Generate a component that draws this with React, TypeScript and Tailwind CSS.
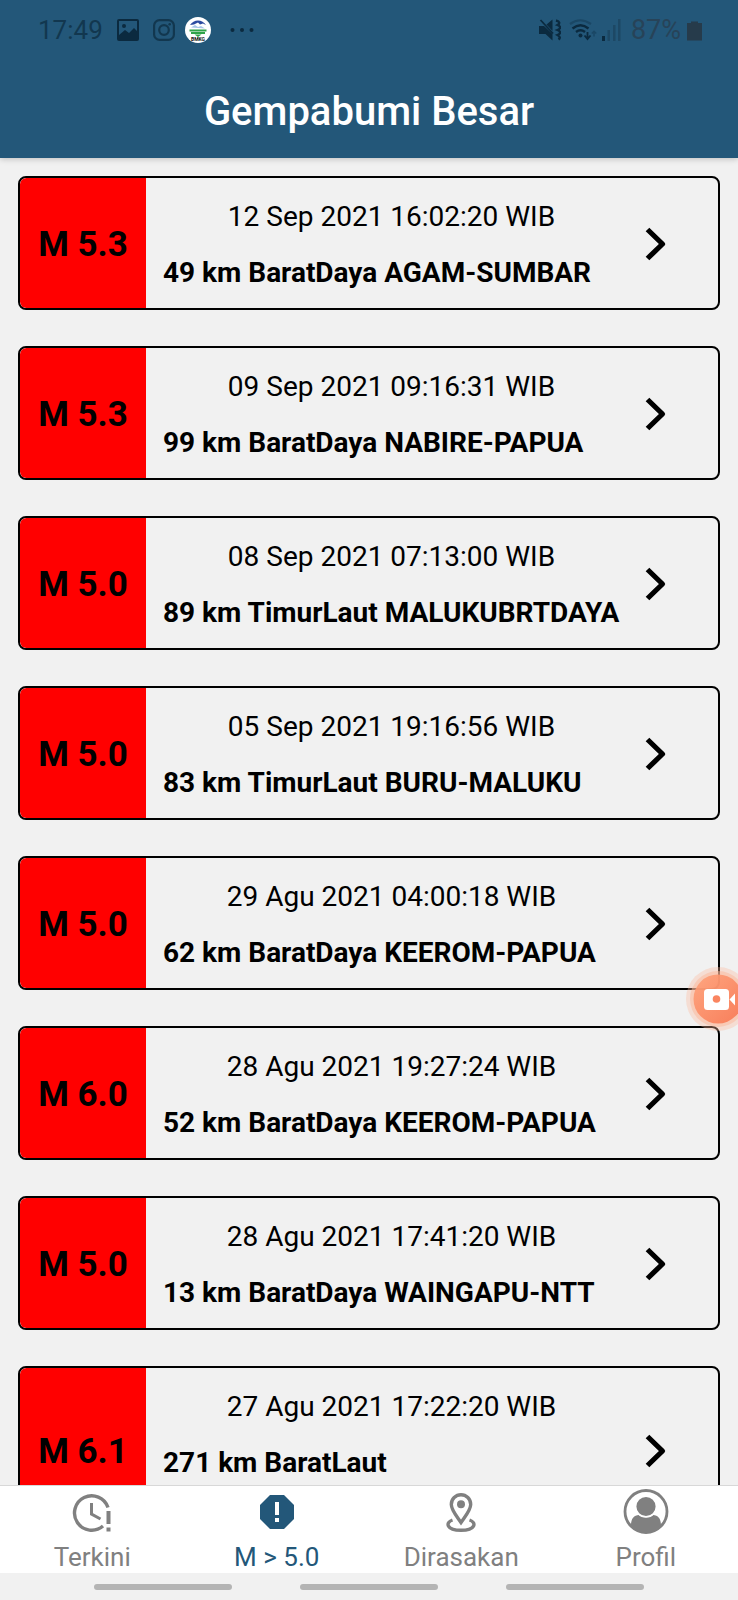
import React from "react";

type Quake = { magnitude: string; time: string; place: string };

const quakes: Quake[] = [
  { magnitude: "M 5.3", time: "12 Sep 2021 16:02:20 WIB", place: "49 km BaratDaya AGAM-SUMBAR" },
  { magnitude: "M 5.3", time: "09 Sep 2021 09:16:31 WIB", place: "99 km BaratDaya NABIRE-PAPUA" },
  { magnitude: "M 5.0", time: "08 Sep 2021 07:13:00 WIB", place: "89 km TimurLaut MALUKUBRTDAYA" },
  { magnitude: "M 5.0", time: "05 Sep 2021 19:16:56 WIB", place: "83 km TimurLaut BURU-MALUKU" },
  { magnitude: "M 5.0", time: "29 Agu 2021 04:00:18 WIB", place: "62 km BaratDaya KEEROM-PAPUA" },
  { magnitude: "M 6.0", time: "28 Agu 2021 19:27:24 WIB", place: "52 km BaratDaya KEEROM-PAPUA" },
  { magnitude: "M 5.0", time: "28 Agu 2021 17:41:20 WIB", place: "13 km BaratDaya WAINGAPU-NTT" },
  { magnitude: "M 6.1", time: "27 Agu 2021 17:22:20 WIB", place: "271 km BaratLaut\nTANIMBAR-MALUKUTENGGARA" },
];

function StatusBar() {
  return (
    <div className="flex h-[60px] items-center justify-between pr-[36px] pl-[38px] text-[#143a54]">
      <div className="flex items-center gap-[14px]">
        <span className="text-[26px] leading-[32px] text-[#12374f]">17:49</span>
        <svg width="22" height="22" viewBox="0 0 22 22" aria-hidden="true">
          <path
            fillRule="evenodd"
            fill="#0b2a3f"
            d="M2 0h18a2 2 0 0 1 2 2v18a2 2 0 0 1-2 2H2a2 2 0 0 1-2-2V2a2 2 0 0 1 2-2Zm0 2v14l6-5 4 3 5-5 3 3V2H2Zm5 3a2 2 0 1 1 0 4 2 2 0 0 1 0-4Z"
          />
        </svg>
        <svg width="22" height="22" viewBox="0 0 22 22" fill="none" stroke="#12374f" strokeWidth="2.2" aria-hidden="true">
          <rect x="1.1" y="1.1" width="19.8" height="19.8" rx="5.5" />
          <circle cx="11" cy="11" r="4.8" />
          <circle cx="16.7" cy="5.3" r="1.3" fill="#12374f" stroke="none" />
        </svg>
        <svg className="-ml-[4px]" width="26" height="26" viewBox="0 0 26 26" aria-hidden="true">
          <circle cx="13" cy="13" r="13" fill="#fff" />
          <path d="M5 8a9.500 9.500 0 0 1 16 0l-3-1.500-3 1-2-2-4 2Z" fill="#2c4ba0" />
          <path d="M6 10.500l4-2.500 3 2 3-1 4 2.500Z" fill="#a9c6e8" />
          <path d="M4.500 13.500h17M6 16h14" stroke="#2fa348" strokeWidth="1.800" />
          <path d="M9.500 17.500h7L13 20Z" fill="#2fa348" />
          <text x="13" y="24" textAnchor="middle" fontSize="5" fontWeight="700" fill="#111">
            BMKG
          </text>
        </svg>
        <svg className="ml-[5px]" width="24" height="6" viewBox="0 0 24 6" fill="#0b2a3f" aria-hidden="true">
          <circle cx="2.500" cy="3" r="2" />
          <circle cx="12" cy="3" r="2" />
          <circle cx="21.500" cy="3" r="2" />
        </svg>
      </div>
      <div className="flex items-center">
        <svg width="22" height="22" viewBox="0 0 22 22" fill="#0b2a3f" aria-hidden="true">
          <path d="M0 7h5l8.500 8V21.500L6.500 15H0Z" />
          <path d="M7.500 5.500 13.500 0.500V12Z" />
          <path d="M1.500 1 14 14.500" stroke="#0b2a3f" strokeWidth="1.800" />
          <path d="M17 1.500c4 1 4 3 1.500 4.500 3.500 1.500 3.500 3.500 0 5 3.500 1.500 3.500 3.500 0 5 2.500 1.500 3 3 1 4.500" fill="none" stroke="#0b2a3f" strokeWidth="2.400" />
        </svg>
        <svg className="ml-[8px]" width="28" height="22" viewBox="0 0 28 22" fill="none" aria-hidden="true">
          <path d="M1 5q10-7.500 21 0" stroke="#1a4765" strokeWidth="2.200" />
          <path d="M3.500 9.500q8-6.500 16 0M7 13q4.500-3.500 9 0" stroke="#0b2a3f" strokeWidth="2.400" />
          <circle cx="11.500" cy="16.500" r="2" fill="#0b2a3f" />
          <path d="M18.500 13v6M15.500 16.500l3 3.500 3-3.500" stroke="#0b2a3f" strokeWidth="1.800" />
          <path d="M25 17.500v-5M22.800 14.500l2.200-2.200 2.200 2.200" stroke="#1a4765" strokeWidth="1.500" />
        </svg>
        <svg className="ml-[5px]" width="19" height="22" viewBox="0 0 19 22" aria-hidden="true">
          <path d="M0 17h3v5H0Z" fill="#0b2a3f" />
          <path d="M5.500 11h2.500v11H5.500ZM11 6h2.500v16H11ZM16 0h2.500v22H16Z" fill="#1d4865" />
        </svg>
        <span className="ml-[10px] text-[27px] leading-[32px] text-[#274358]">87%</span>
        <svg className="ml-[6px]" width="15" height="22" viewBox="0 0 15 22" fill="#263b4b" aria-hidden="true">
          <path d="M4 2.500h7V4h4v17.500H0V4h4Z" />
        </svg>
      </div>
    </div>
  );
}

function QuakeCard({ magnitude, time, place }: Quake) {
  return (
    <li>
      <a href="#detail" className="flex overflow-hidden rounded-[8px] border-2 border-black text-black">
        <span className="flex w-[126px] shrink-0 items-center justify-center rounded-l-[6px] bg-[#ff0000] pt-[4px] text-[35px] leading-[44px] font-bold">
          {magnitude}
        </span>
        <span className="flex min-w-0 flex-1 flex-col gap-[22px] pt-[22px] pb-[18px] pl-[17px] text-[28px] leading-[34px]">
          <span className="text-center">{time}</span>
          <span className="font-bold whitespace-pre-line">{place}</span>
        </span>
        <span className="flex w-[98px] shrink-0 items-center pt-[2px] pl-[25px]">
          <svg width="22" height="34" viewBox="0 0 22 34" fill="none" stroke="#000" strokeWidth="5.200" aria-hidden="true">
            <path d="M2.500 2.500 17.500 17 2.500 31.500" strokeLinejoin="round" />
          </svg>
        </span>
      </a>
    </li>
  );
}

function ClockAlertIcon() {
  return (
    <svg width="40" height="46" viewBox="0 0 40 46" fill="none" stroke="#808080" strokeWidth="3.400" aria-hidden="true">
      <path d="M36 19.500A17.200 17.200 0 1 0 31 38" />
      <path d="M19.500 15v11l9 5" strokeWidth="3" />
      <path d="M36.500 23v13M36.500 39.500v4" strokeWidth="4" />
    </svg>
  );
}

function OctagonAlertIcon() {
  return (
    <svg width="40" height="46" viewBox="0 0 40 46" aria-hidden="true">
      <path d="M13 7h14l10 10v14L27 41H13L3 31V17Z" fill="#235779" />
      <path d="M20 14v13M20 30v4" stroke="#fff" strokeWidth="4" />
    </svg>
  );
}

function PinIcon() {
  return (
    <svg width="40" height="46" viewBox="0 0 40 46" fill="none" stroke="#808080" strokeWidth="3.400" aria-hidden="true">
      <path d="M20 34.500C16 28.500 10.300 22 10.300 16.400a9.700 9.700 0 0 1 19.400 0C29.700 22 24 28.500 20 34.500Z" />
      <circle cx="20" cy="16.300" r="4" fill="#808080" stroke="none" />
      <path d="M11.500 32C4 34.500 5.500 42.300 20 42.300S36 34.500 28.500 32" />
    </svg>
  );
}

function PersonIcon() {
  return (
    <svg width="46" height="46" viewBox="0 0 46 46" aria-hidden="true">
      <circle cx="23" cy="23.500" r="21" fill="none" stroke="#808080" strokeWidth="2.800" />
      <path d="M8 37.500c0-7 3-10.500 8-10.500 3 3 11 3 14 0 5 0 8 3.500 8 10.500a21 21 0 0 1-30 0Z" fill="#808080" />
      <circle cx="23" cy="18.500" r="10.400" fill="#808080" stroke="#fff" strokeWidth="1.600" />
    </svg>
  );
}

const tabs = [
  { label: "Terkini", icon: <ClockAlertIcon />, active: false },
  { label: "M > 5.0", icon: <OctagonAlertIcon />, active: true },
  { label: "Dirasakan", icon: <PinIcon />, active: false },
  { label: "Profil", icon: <PersonIcon />, active: false },
];

export default function App() {
  return (
    <div className="relative flex h-screen flex-col overflow-hidden bg-[#f1f1f1] font-['Roboto',sans-serif]">
      <header className="relative shrink-0 bg-[#235779] shadow-[0_1px_6px_rgba(0,0,0,0.22)]">
        <StatusBar />
        <h1 className="pt-[28px] pb-[22px] text-center text-[40px] leading-[48px] font-medium text-white">
          Gempabumi Besar
        </h1>
      </header>

      <main className="min-h-0 flex-1 overflow-hidden">
        <ul className="flex flex-col gap-[36px] p-[18px]">
          {quakes.map((quake) => (
            <QuakeCard key={quake.time} {...quake} />
          ))}
        </ul>
      </main>

      <nav className="grid h-[88px] shrink-0 grid-cols-4 border-t border-[#d8d8d8] bg-white">
        {tabs.map((tab) => (
          <a
            key={tab.label}
            href="#tab"
            aria-current={tab.active ? "page" : undefined}
            className={
              tab.active
                ? "flex flex-col items-center gap-[7px] pt-[2px] text-[26px] leading-[32px] text-[#235779]"
                : "flex flex-col items-center gap-[7px] pt-[2px] text-[26px] leading-[32px] text-[#808080]"
            }
          >
            {tab.icon}
            {tab.label}
          </a>
        ))}
      </nav>

      <div className="flex h-[27px] shrink-0 items-center justify-center gap-[68px]">
        <span className="h-[6px] w-[138px] rounded-full bg-[#b4b4b4]" />
        <span className="h-[6px] w-[138px] rounded-full bg-[#b4b4b4]" />
        <span className="h-[6px] w-[138px] rounded-full bg-[#b4b4b4]" />
      </div>

      <button type="button" aria-label="Rekam layar" className="absolute top-[967px] -right-[12px]">
        <svg width="64" height="64" viewBox="0 0 64 64" aria-hidden="true">
          <defs>
            <linearGradient id="record" x1="0" y1="0" x2="1" y2="1">
              <stop offset="0" stopColor="#ffa27a" />
              <stop offset="1" stopColor="#f87550" />
            </linearGradient>
          </defs>
          <circle cx="32" cy="32" r="32" fill="#fbb79a" opacity="0.35" />
          <circle cx="32" cy="32" r="28" fill="#fbb79a" opacity="0.5" />
          <circle cx="32" cy="32" r="24.500" fill="url(#record)" opacity="0.9" />
          <rect x="18" y="22" width="25" height="21" rx="3.500" fill="#fff" />
          <path d="M43.500 32.500l5.500-6v12Z" fill="#fff" />
          <circle cx="30.500" cy="32" r="3.800" fill="#fa8560" />
        </svg>
      </button>
    </div>
  );
}
